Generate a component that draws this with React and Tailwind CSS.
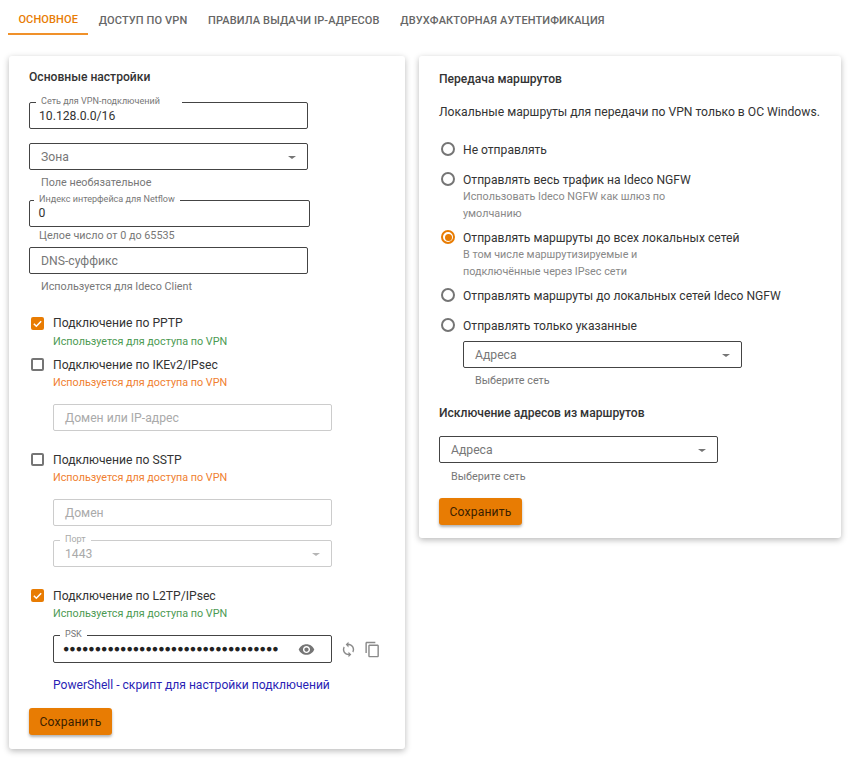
import React from 'react';

const Caret = ({ disabled }) => (
  <span className={`w-0 h-0 border-x-[4px] border-x-transparent border-t-[3.5px] ${disabled ? 'border-t-[#b5b5b5]' : 'border-t-[#757575]'}`} />
);

const Helper = ({ children, className = '' }) => (
  <div className={`text-[10.8px] leading-[13px] text-[#777] ${className}`}>{children}</div>
);

const Field = ({ label, value, placeholder, select, disabled, className = '', labelClass = 'left-[6px]', textClass = 'pl-[11px] pt-px' }) => (
  <div className={`relative h-[27px] rounded-[2px] border flex items-center pr-[11px] ${disabled ? 'border-[#ccc]' : 'border-[#444]'} ${textClass} ${className}`}>
    {label && (
      <span className={`absolute -top-[7px] bg-white px-[5px] text-[9.05px] leading-[11px] whitespace-nowrap ${disabled ? 'text-[#aaa]' : 'text-[#777]'} ${labelClass}`}>
        {label}
      </span>
    )}
    {value && <span className={`text-[12.2px] ${disabled ? 'text-[#aaa]' : 'text-[#333]'}`}>{value}</span>}
    {placeholder && <span className={`text-[12.2px] ${disabled ? 'text-[#aaa]' : 'text-[#777]'}`}>{placeholder}</span>}
    {select && <span className="ml-auto flex"><Caret disabled={disabled} /></span>}
  </div>
);

const Check = ({ label, checked, note, noteClass, labelClass = 'pt-[2px]' }) => (
  <div>
    <div className="flex items-center h-[16px]">
      {checked ? (
        <span className="ml-[2px] w-[13px] h-[13px] rounded-[2px] bg-[#e87c03] flex items-center justify-center">
          <svg width="11" height="11" viewBox="0 0 24 24" fill="none" stroke="#fff" strokeWidth="3.4">
            <path d="M4 12.5l5.5 5.5L20 7" />
          </svg>
        </span>
      ) : (
        <span className="ml-[2px] w-[13px] h-[13px] rounded-[2px] border-2 border-[#757575]" />
      )}
      <span className={`ml-[9px] text-[12.15px] text-[#333] ${labelClass}`}>{label}</span>
    </div>
    <div className={`ml-[24px] mt-[4px] text-[10.8px] leading-[13px] ${noteClass}`}>{note}</div>
  </div>
);

const Radio = ({ label, checked, className = '', children }) => (
  <div className={className}>
    <div className="flex items-center h-[16px]">
      <span className={`ml-[2px] w-[14px] h-[14px] rounded-full border-2 flex items-center justify-center ${checked ? 'border-[#e87c03]' : 'border-[#757575]'}`}>
        {checked && <span className="w-[7px] h-[7px] rounded-full bg-[#e87c03]" />}
      </span>
      <span className="ml-[8px] pt-[2px] text-[12.1px] text-[#333]">{label}</span>
    </div>
    {children}
  </div>
);

const SaveButton = ({ className = '' }) => (
  <button className={`block w-[83px] h-[27px] pt-px rounded-[3px] bg-[#e87c03] text-[12.1px] tracking-[0.2px] text-[#3a2000] shadow-[0_2px_3px_rgba(0,0,0,0.3)] ${className}`}>
    Сохранить
  </button>
);

const tabs = ['Основное', 'Доступ по VPN', 'Правила выдачи IP-адресов', 'Двухфакторная аутентификация'];

export default function App() {
  return (
    <div className="w-[849px] h-[759px] bg-white overflow-hidden font-['Roboto',sans-serif]">
      <div className="flex pl-[8px] pt-[7px] h-[35px]">
        {tabs.map((tab, i) => (
          <div
            key={tab}
            className={`h-[28px] px-[10.4px] flex items-center text-[11px] font-medium uppercase tracking-[0.12px] ${i === 0 ? 'text-[#e87c03] border-b-2 border-[#f0912a]' : 'text-[#666]'}`}
          >
            {tab}
          </div>
        ))}
      </div>

      <div className="flex items-start pl-[9px] pt-[21px] gap-[14px]">
        <div className="w-[396px] h-[693px] rounded-[3px] bg-white shadow-[0_2px_6px_rgba(0,0,0,0.28)] pl-[20px] pt-[14px]">
          <h2 className="text-[12.1px] leading-[15px] font-medium text-[#333]">Основные настройки</h2>

          <Field label="Сеть для VPN-подключений" value="10.128.0.0/16" className="w-[279px] mt-[17px]" textClass="pl-[9px] pt-px" labelClass="left-[6px] pr-[22px]" />
          <Field placeholder="Зона" select className="w-[279px] mt-[14px]" />
          <Helper className="ml-[12px] mt-[6px]">Поле необязательное</Helper>
          <Field label="Индекс интерфейса для Netflow" value="0" className="w-[281px] mt-[11px]" textClass="pl-[8.5px]" labelClass="left-[4px]" />
          <Helper className="ml-[10px] mt-[2px]">Целое число от 0 до 65535</Helper>
          <Field placeholder="DNS-суффикс" className="w-[279px] mt-[5px]" />
          <Helper className="ml-[12px] mt-[6px]">Используется для Ideco Client</Helper>

          <div className="mt-[22px]">
            <Check checked label="Подключение по PPTP" labelClass="" note="Используется для доступа по VPN" noteClass="text-[#4c9a52]" />
          </div>
          <div className="mt-[8px]">
            <Check label="Подключение по IKEv2/IPsec" note="Используется для доступа по VPN" noteClass="text-[#f08030]" />
          </div>
          <Field placeholder="Домен или IP-адрес" disabled className="w-[279px] ml-[24px] mt-[15px]" />
          <div className="mt-[20px]">
            <Check label="Подключение по SSTP" note="Используется для доступа по VPN" noteClass="text-[#f08030]" />
          </div>
          <Field placeholder="Домен" disabled className="w-[279px] ml-[24px] mt-[15px]" />
          <Field label="Порт" value="1443" select disabled className="w-[279px] ml-[24px] mt-[14px]" />
          <div className="mt-[20px]">
            <Check checked label="Подключение по L2TP/IPsec" note="Используется для доступа по VPN" noteClass="text-[#4c9a52]" />
          </div>

          <div className="flex items-center ml-[24px] mt-[15px]">
            <div className="relative w-[279px] h-[28px] rounded-[2px] border border-[#444] flex items-center pl-[9px]">
              <span className="absolute -top-[7px] left-[6px] bg-white px-[5px] text-[9.05px] leading-[11px] text-[#777]">PSK</span>
              <input
                type="text"
                readOnly
                value={'●'.repeat(44)}
                className="w-[215px] bg-transparent outline-none text-[10.5px] text-[#222]"
              />
              <svg className="ml-[20px]" width="17" height="17" viewBox="0 0 24 24" fill="#757575">
                <path d="M12 4.5C7 4.5 2.73 7.61 1 12c1.73 4.39 6 7.5 11 7.5s9.27-3.11 11-7.5c-1.73-4.39-6-7.5-11-7.5zM12 17c-2.76 0-5-2.24-5-5s2.24-5 5-5 5 2.24 5 5-2.24 5-5 5zm0-8c-1.66 0-3 1.34-3 3s1.34 3 3 3 3-1.34 3-3-1.34-3-3-3z" />
              </svg>
            </div>
            <svg className="ml-[8px]" width="17" height="17" viewBox="0 0 24 24" fill="#8a8a8a">
              <path d="M12 4V1L8 5l4 4V6c3.31 0 6 2.69 6 6 0 1.01-.25 1.97-.7 2.8l1.46 1.46C19.54 15.03 20 13.57 20 12c0-4.42-3.58-8-8-8zm0 14c-3.31 0-6-2.69-6-6 0-1.01.25-1.97.7-2.8L5.24 7.74C4.46 8.97 4 10.43 4 12c0 4.42 3.58 8 8 8v3l4-4-4-4v3z" />
            </svg>
            <svg className="ml-[7px]" width="17" height="17" viewBox="0 0 24 24" fill="#8a8a8a">
              <path d="M16 1H4c-1.1 0-2 .9-2 2v14h2V3h12V1zm3 4H8c-1.1 0-2 .9-2 2v14c0 1.1.9 2 2 2h11c1.1 0 2-.9 2-2V7c0-1.1-.9-2-2-2zm0 16H8V7h11v14z" />
            </svg>
          </div>

          <a className="block ml-[24px] mt-[15px] text-[12.1px] leading-[15px] text-[#2a1fb5]">PowerShell - скрипт для настройки подключений</a>
          <SaveButton className="mt-[15px]" />
        </div>

        <div className="w-[422px] h-[482px] rounded-[3px] bg-white shadow-[0_2px_6px_rgba(0,0,0,0.28)] pl-[20px] pt-[16px]">
          <h2 className="text-[12.1px] leading-[15px] font-medium text-[#333]">Передача маршрутов</h2>
          <p className="mt-[18px] text-[12.15px] leading-[15px] text-[#333]">Локальные маршруты для передачи по VPN только в ОС Windows.</p>

          <Radio label="Не отправлять" className="mt-[21px]" />
          <Radio label="Отправлять весь трафик на Ideco NGFW" className="mt-[14px]">
            <div className="ml-[24px] mt-[1px] text-[10.8px] leading-[17px] text-[#888]">
              Использовать Ideco NGFW как шлюз по<br />умолчанию
            </div>
          </Radio>
          <Radio label="Отправлять маршруты до всех локальных сетей" checked className="mt-[7px]">
            <div className="ml-[24px] mt-[1px] text-[10.8px] leading-[17px] text-[#888]">
              В том числе маршрутизируемые и<br />подключённые через IPsec сети
            </div>
          </Radio>
          <Radio label="Отправлять маршруты до локальных сетей Ideco NGFW" className="mt-[7px]" />
          <Radio label="Отправлять только указанные" className="mt-[14px]" />

          <Field placeholder="Адреса" select className="w-[279px] ml-[24px] mt-[8px]" />
          <Helper className="ml-[36px] mt-[6px]">Выберите сеть</Helper>
          <h2 className="mt-[19px] text-[12.1px] leading-[15px] font-medium text-[#333]">Исключение адресов из маршрутов</h2>
          <Field placeholder="Адреса" select className="w-[279px] mt-[15px]" />
          <Helper className="ml-[12px] mt-[7px]">Выберите сеть</Helper>
          <SaveButton className="mt-[15px]" />
        </div>
      </div>
    </div>
  );
}
